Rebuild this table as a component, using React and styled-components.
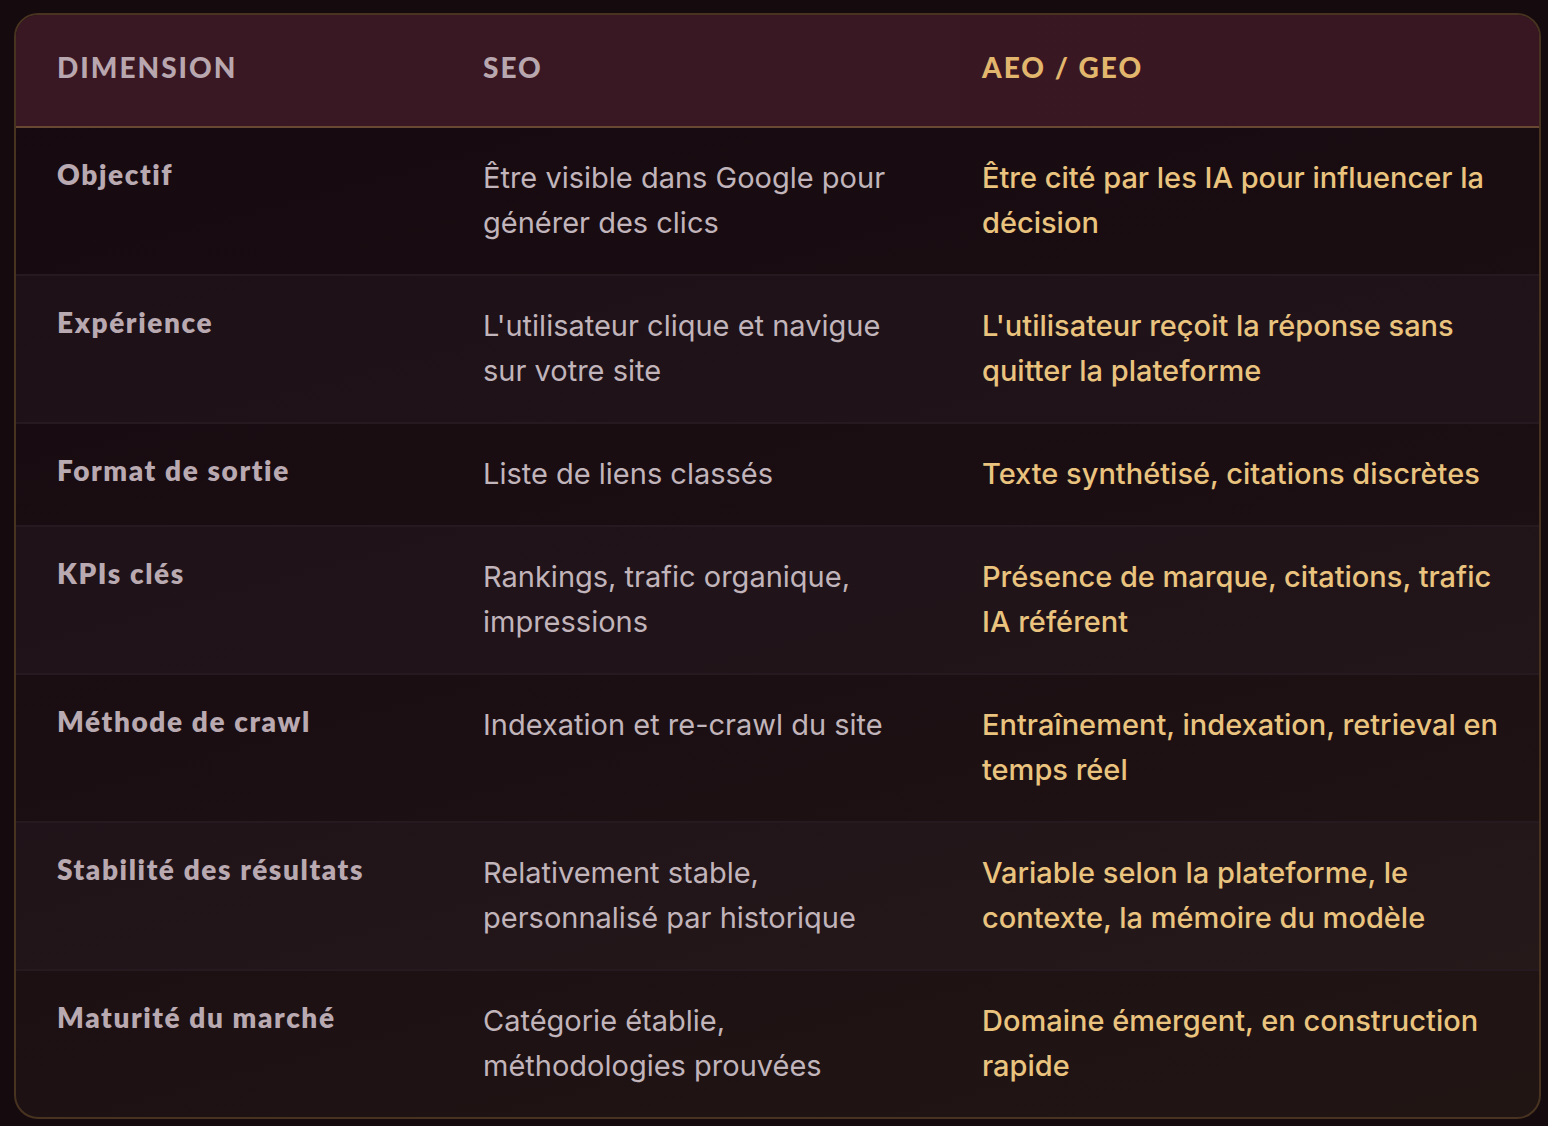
import React from 'react';
import styled, { createGlobalStyle } from 'styled-components';

const GlobalStyle = createGlobalStyle`
  html, body {
    margin: 0;
    padding: 0;
    background: #150a0e;
  }
  body {
    font-family: Inter, "Noto Sans", sans-serif;
    -webkit-font-smoothing: antialiased;
  }
`

const Page = styled.div`
  padding: 13px 7px 9px 14px;
`

const Table = styled.div`
  border: 2px solid #47331f;
  border-radius: 24px;
  overflow: hidden;
  background: linear-gradient(165deg, #160a10 0%, #1a0e13 50%, #211514 100%);
`

const Grid = styled.div`
  display: grid;
  grid-template-columns: 426px 499px 1fr;
`

const HeadRow = styled(Grid)`
  background: linear-gradient(90deg, #3a1823 0%, #391722 100%);
  border-bottom: 2px solid #684733;
`

const HeadCell = styled.div`
  padding: 37px 24px 43px 41px;
  font-family: Lato, "Open Sans", sans-serif;
  font-weight: 900;
  font-size: 28px;
  line-height: 31px;
  letter-spacing: 2px;
  text-transform: uppercase;
  color: ${p => (p.$accent ? '#e3b66d' : '#b9a7af')};
`

const Row = styled(Grid)`
  background: ${p => (p.$shade ? 'rgba(255, 235, 245, 0.028)' : 'transparent')};
  border-top: ${p => (p.$first ? 'none' : '2px solid #261a20')};
`

const LabelCell = styled.div`
  padding: 28px 24px 28px 41px;
  font-family: Lato, "Open Sans", sans-serif;
  font-weight: 800;
  font-size: 28px;
  line-height: 36px;
  letter-spacing: 1.6px;
  color: #b9a9b1;
`

const SeoCell = styled.div`
  padding: 27px 40px 29px 41px;
  font-size: 29px;
  line-height: 45px;
  font-weight: 400;
  color: #c1b5bb;
`

const GeoCell = styled.div`
  padding: 27px 28px 29px 41px;
  font-size: 29px;
  line-height: 45px;
  font-weight: 500;
  color: #eac47f;
`

const rows = [
  ['Objectif', 'Être visible dans Google pour générer des clics', 'Être cité par les IA pour influencer la décision'],
  ['Expérience', "L'utilisateur clique et navigue sur votre site", "L'utilisateur reçoit la réponse sans quitter la plateforme"],
  ['Format de sortie', 'Liste de liens classés', 'Texte synthétisé, citations discrètes'],
  ['KPIs clés', 'Rankings, trafic organique, impressions', 'Présence de marque, citations, trafic IA référent'],
  ['Méthode de crawl', 'Indexation et re-crawl du site', 'Entraînement, indexation, retrieval en temps réel'],
  ['Stabilité des résultats', 'Relativement stable, personnalisé par historique', 'Variable selon la plateforme, le contexte, la mémoire du modèle'],
  ['Maturité du marché', 'Catégorie établie, méthodologies prouvées', 'Domaine émergent, en construction rapide'],
]

export default function App() {
  return (
    <Page>
      <GlobalStyle />
      <Table>
        <HeadRow>
          <HeadCell>Dimension</HeadCell>
          <HeadCell>SEO</HeadCell>
          <HeadCell $accent>AEO / GEO</HeadCell>
        </HeadRow>
        {rows.map(([label, seo, geo], i) => (
          <Row key={label} $first={i === 0} $shade={i % 2 === 1}>
            <LabelCell>{label}</LabelCell>
            <SeoCell>{seo}</SeoCell>
            <GeoCell>{geo}</GeoCell>
          </Row>
        ))}
      </Table>
    </Page>
  );
}
